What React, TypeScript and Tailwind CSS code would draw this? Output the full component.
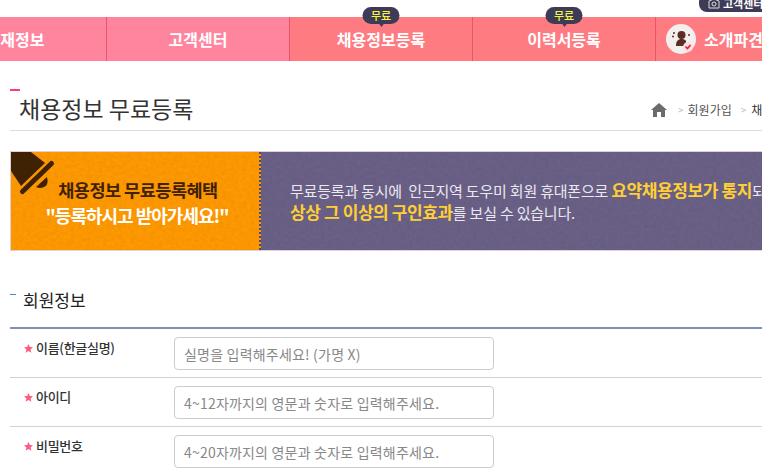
const font = { fontFamily: '"Noto Sans CJK KR", "Noto Sans", sans-serif' };

const FIELDS = [
  { label: "이름(한글실명)", placeholder: "실명을 입력해주세요! (가명 X)" },
  { label: "아이디", placeholder: "4~12자까지의 영문과 숫자로 입력해주세요." },
  { label: "비밀번호", placeholder: "4~20자까지의 영문과 숫자로 입력해주세요." },
];

const FreeBadge = () => (
  <div className="absolute left-1/2 top-[-10px] flex h-[17px] w-[37px] -translate-x-1/2 items-center justify-center rounded-[9px] bg-[#3d3b55] text-[11px] font-medium text-[#f5f53c]">
    무료
    <span className="absolute top-[16px] h-0 w-0 border-x-[3px] border-t-[4px] border-x-transparent border-t-[#3d3b55]" />
  </div>
);

const NavItem = ({ label, className, badge }: { label: string; className: string; badge?: boolean }) => (
  <div className={`relative flex h-full w-[183px] shrink-0 items-center justify-center border-r border-[#ec5568] pb-[1px] text-[16px] font-bold text-white ${className}`}>
    {badge && <FreeBadge />}
    {label}
  </div>
);

const PersonIcon = () => (
  <div className="flex h-[30px] w-[30px] shrink-0 items-center justify-center rounded-full bg-[#f3efee]">
    <svg width="30" height="30" viewBox="0 0 30 30">
      <circle cx="15.500" cy="11" r="4" fill="#5b2c22" />
      <path d="M10 22c0-5 2-7 5.500-7 2 0 3.500.6 4.500 2v5z" fill="#5b2c22" />
      <circle cx="8" cy="9" r="1" fill="#5b2c22" />
      <circle cx="7" cy="12.500" r="1" fill="#5b2c22" />
      <circle cx="23" cy="11" r="1" fill="#5b2c22" />
      <circle cx="22" cy="23" r="5" fill="#fbdfe2" />
      <path d="M19.500 22.500l2 2 3-3.500" fill="none" stroke="#e8192c" strokeWidth="1.600" />
    </svg>
  </div>
);

// felt-like grain on the banner picture
const Grain = ({ id }: { id: string }) => (
  <svg className="pointer-events-none absolute inset-0 h-full w-full opacity-[0.05]">
    <filter id={id}>
      <feTurbulence type="fractalNoise" baseFrequency="0.25 0.3" numOctaves="3" seed="4" />
      <feColorMatrix values="0 0 0 0 0  0 0 0 0 0  0 0 0 0 0  1.600 0 0 0 -0.400" />
    </filter>
    <rect width="100%" height="100%" filter={`url(#${id})`} />
  </svg>
);

export default function App() {
  return (
    <div className="relative h-[474px] w-[762px] overflow-hidden bg-white" style={font}>
      <div className="absolute right-0 top-[-6px] z-10 flex h-[18px] w-[63px] items-center gap-[3px] overflow-hidden rounded-bl-[8px] rounded-tl-[8px] bg-[#3d3b55] pl-[9px] text-[11px] font-bold whitespace-nowrap text-white">
        <svg width="12" height="11" viewBox="0 0 12 11" className="shrink-0">
          <path d="M1 3l5-2 5 2v7H1z" fill="none" stroke="#ddd" strokeWidth="1" />
          <circle cx="6" cy="6" r="2" fill="none" stroke="#ddd" />
        </svg>
        고객센터
      </div>

      <nav className="mt-[17px] ml-[-76px] flex h-[44px] w-[1000px]">
        <NavItem label="인재정보" className="bg-[#ff859f]" />
        <NavItem label="고객센터" className="bg-[#ff859f]" />
        <NavItem label="채용정보등록" className="bg-[#ff7b82]" badge />
        <NavItem label="이력서등록" className="bg-[#ff7b82]" badge />
        <div className="flex h-full w-[300px] shrink-0 items-center gap-[8px] bg-[#ff7b82] pl-[10px] text-[16px] font-bold text-white">
          <PersonIcon />
          소개파견
        </div>
      </nav>

      <main className="pl-[10px]">
        <header className="relative mt-[28px] flex h-[42px] items-start justify-between border-b border-[#dddddd] pt-[3px]">
          <span className="absolute left-0 top-0 h-[2px] w-[10px] bg-[#ff3d6e]" />
          <h1 className="pl-[9px] text-[23px] leading-[32px] font-normal text-[#333333]">채용정보 무료등록</h1>
          <div className="mt-[2px] flex h-[26px] w-[111px] shrink-0 items-center overflow-hidden pt-[5px] text-[12px] whitespace-nowrap text-[#555555]">
            <svg width="16" height="14" viewBox="0 0 16 14" className="shrink-0">
              <path d="M8 0L0 7h2v7h4V9h4v5h4V7h2z" fill="#6b6b6b" />
            </svg>
            <span className="ml-[11px] mr-[4px] text-[10px] text-[#bbbbbb]">&gt;</span>
            회원가입
            <span className="ml-[9px] mr-[5px] text-[10px] text-[#bbbbbb]">&gt;</span>
            <span className="text-[#333333]">채용정보</span>
          </div>
        </header>

        <section className="mt-[20px] flex h-[100px] w-[800px] border border-[#e3cfd6]">
          <div className="relative flex w-[250px] shrink-0 flex-col items-center overflow-hidden border-r-2 border-dotted border-[#4f4577] bg-[#ff9a02] pt-[26px] text-center">
            <Grain id="grain-left" />
            <svg width="54" height="46" viewBox="0 0 54 46" className="absolute left-0 top-0">
              <path d="M0 0H20L34 11 10 34 0 19z" fill="#3f2103" />
              <path d="M11.500 39.500L40.500 11.500" stroke="#3f2103" strokeWidth="5" strokeLinecap="round" />
              <path d="M25 35L36 25Q38 33 33 35 29 37 25 35z" fill="#3f2103" />
            </svg>
            <p className="relative pl-[6px] text-[17.500px] leading-[24px] font-bold tracking-[-0.5px] text-[#3f2103]">채용정보 무료등록혜택</p>
            <p className="relative pl-[4px] text-[18px] leading-[26px] font-bold tracking-[-1px] text-white">"등록하시고 받아가세요!"</p>
          </div>
          <div className="relative flex-1 bg-[#6b6188] pl-[29px] pt-[27px] text-[15px] leading-[21px] tracking-[-0.2px] whitespace-nowrap text-[#ebe8f0]">
            <Grain id="grain-right" />
            <p className="relative">무료등록과 동시에 &nbsp;인근지역 도우미 회원 휴대폰으로 <b className="text-[17px] tracking-[-0.4px] text-[#ffcf33]">요약채용정보가 통지</b>되어</p>
            <p className="relative"><b className="text-[17px] tracking-[-0.4px] text-[#ffcf33]">상상 그 이상의 구인효과</b>를 보실 수 있습니다.</p>
          </div>
        </section>

        <section className="mt-[37px]">
          <div className="relative h-[39px] pl-[13px] text-[17px] leading-[24px] text-[#222222]">
            <span className="absolute left-0 top-[6px] h-px w-[6px] bg-[#5a7fc0]" />
            회원정보
          </div>
          <div className="border-t-2 border-[#7f8fb5]">
            {FIELDS.map((f, i) => (
              <div key={f.label} className={`flex h-[49px] items-start ${i < 2 ? "border-b border-[#ccd2e0]" : ""}`}>
                <label className="flex w-[164px] shrink-0 items-center gap-[3px] pl-[14px] pt-[9px] text-[13px] leading-[20px] font-medium tracking-[-0.3px] text-[#333333]">
                  <svg width="9" height="9" viewBox="0 0 10 10" className="shrink-0">
                    <path d="M5 0l1.500 3.400 3.500.3-2.700 2.300.9 3.600L5 7.700 1.800 9.600l.9-3.600L0 3.700l3.500-.3z" fill="#ff5a85" />
                  </svg>
                  {f.label}
                </label>
                <input
                  readOnly
                  placeholder={f.placeholder}
                  className="mt-[8px] h-[33px] w-[320px] rounded-[4px] border border-[#cccccc] bg-white px-[9px] text-[14px] tracking-[0.2px] outline-none placeholder:text-[#888888]"
                />
              </div>
            ))}
          </div>
        </section>
      </main>
    </div>
  );
}
